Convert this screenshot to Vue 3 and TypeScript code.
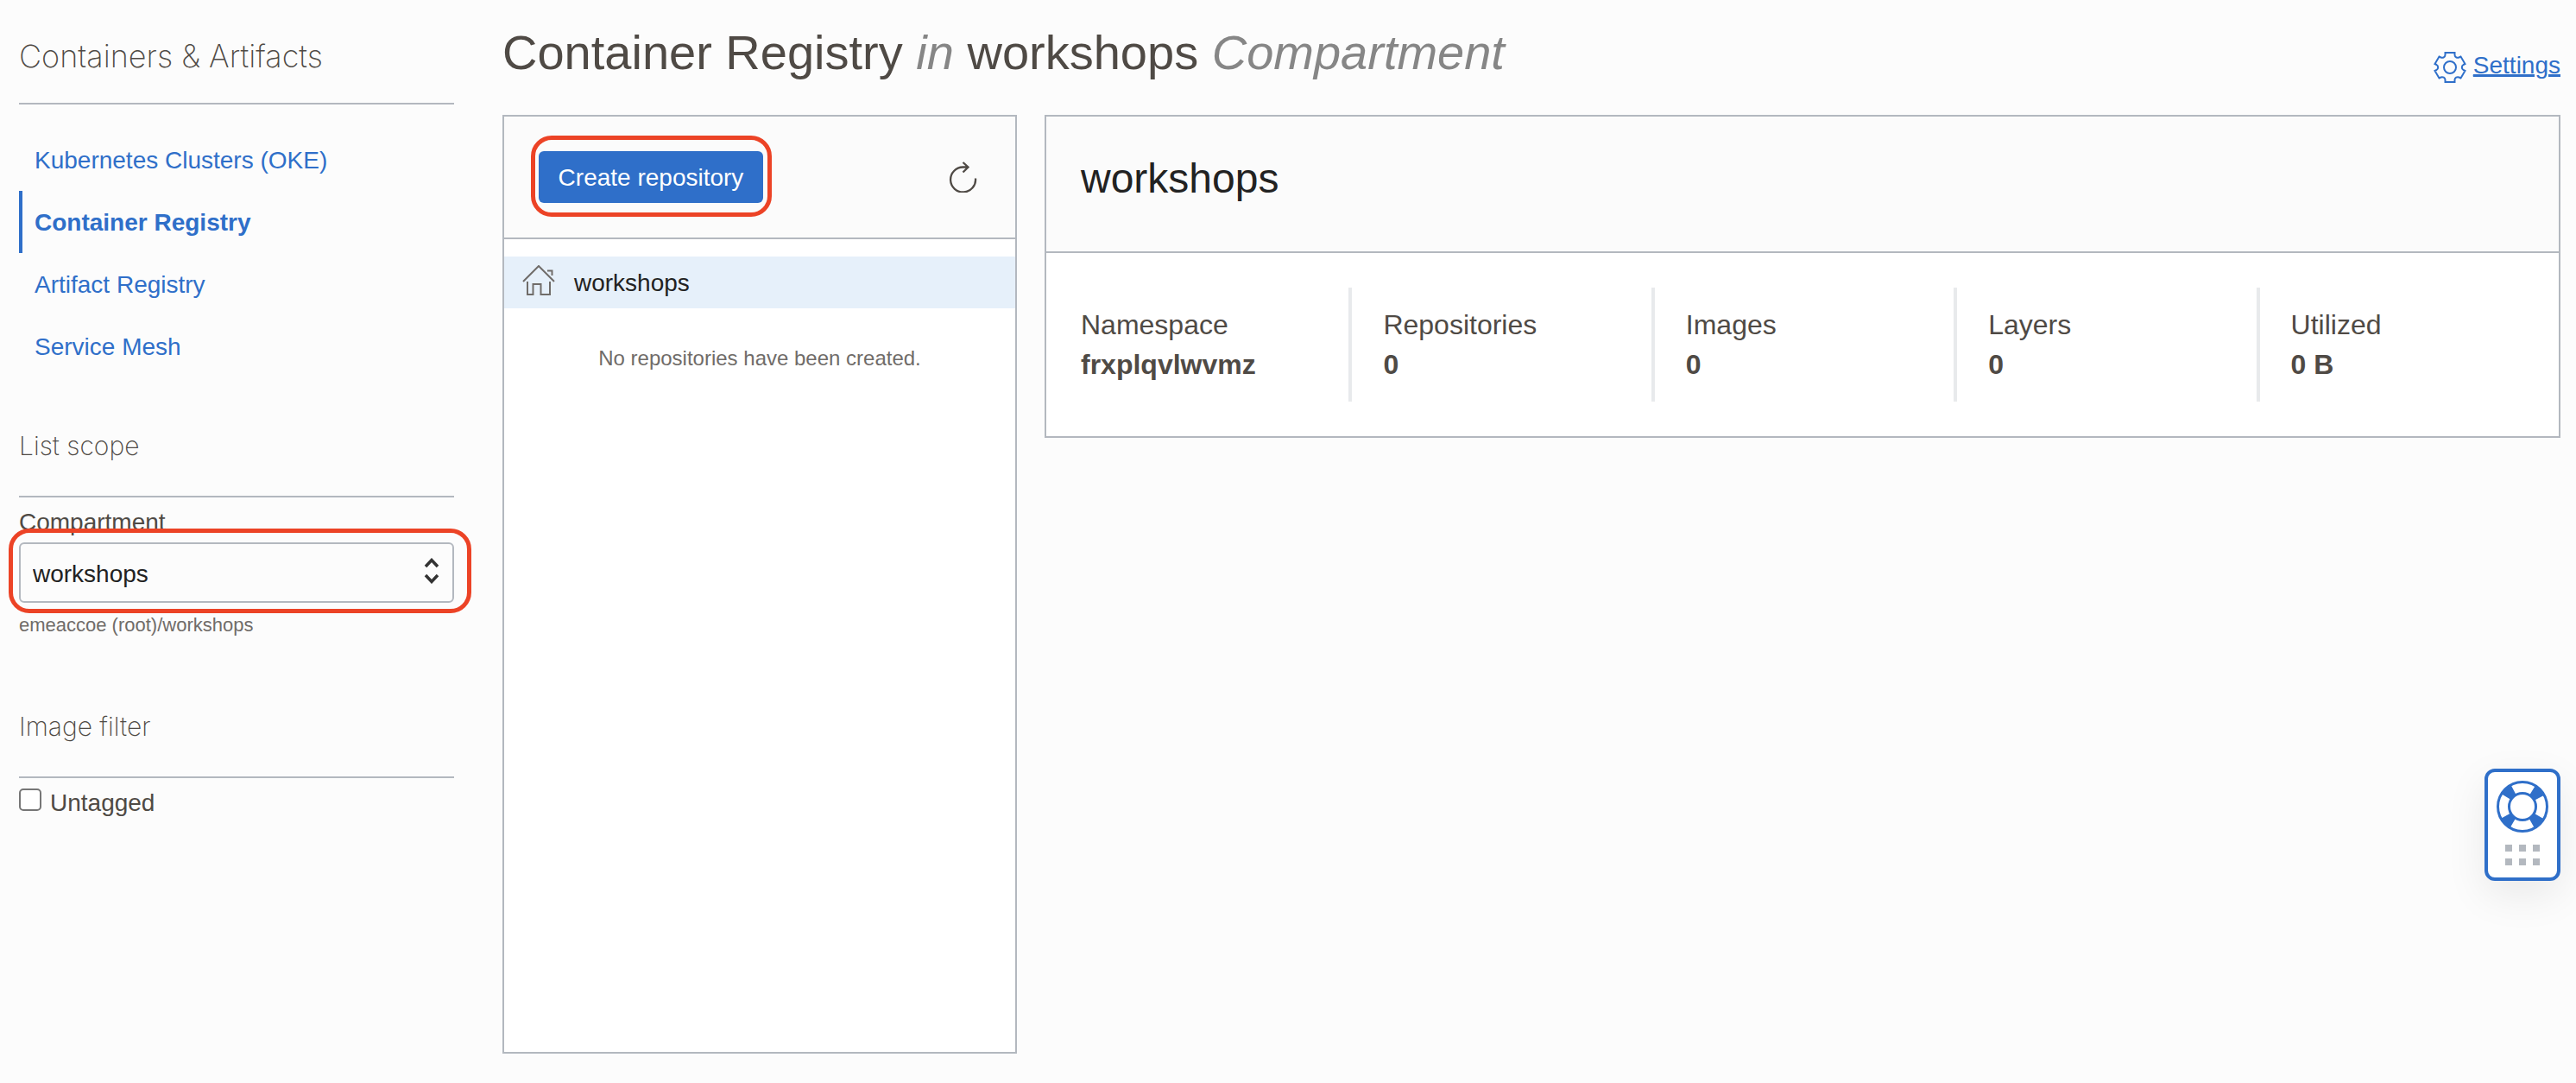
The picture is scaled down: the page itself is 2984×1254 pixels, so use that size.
<script setup lang="ts">
import { ref } from 'vue'

interface NavItem { label: string; active: boolean }
interface Stat { label: string; value: string }

const navItems: NavItem[] = [
  { label: 'Kubernetes Clusters (OKE)', active: false },
  { label: 'Container Registry', active: true },
  { label: 'Artifact Registry', active: false },
  { label: 'Service Mesh', active: false },
]

const stats: Stat[] = [
  { label: 'Namespace', value: 'frxplqvlwvmz' },
  { label: 'Repositories', value: '0' },
  { label: 'Images', value: '0' },
  { label: 'Layers', value: '0' },
  { label: 'Utilized', value: '0 B' },
]

const compartment = ref('workshops')
const untagged = ref(false)
</script>

<template>
  <div class="page">
    <aside class="sidebar">
      <h2 class="side-title">Containers &amp; Artifacts</h2>
      <nav class="nav">
        <a v-for="item in navItems" :key="item.label" href="#" class="nav-link" :class="{ active: item.active }">{{ item.label }}</a>
      </nav>

      <section class="side-section">
        <h3 class="section-title">List scope</h3>
        <label class="field-label" for="compartment">Compartment</label>
        <div class="select-wrap">
          <select id="compartment" v-model="compartment" class="select">
            <option value="workshops">workshops</option>
          </select>
          <svg class="chevrons" viewBox="0 0 18 30" width="18" height="30" aria-hidden="true">
            <path d="M2 10 9 2.500l7 7.500M2 20l7 7.500 7-7.500" fill="none" stroke="#333" stroke-width="3.500" />
          </svg>
        </div>
        <p class="hint">emeaccoe (root)/workshops</p>
      </section>

      <section class="side-section">
        <h3 class="section-title">Image filter</h3>
        <label class="check">
          <input v-model="untagged" type="checkbox" class="checkbox" />
          <span>Untagged</span>
        </label>
      </section>
    </aside>

    <main class="main">
      <header class="top">
        <h1 class="heading">Container Registry <em>in</em> workshops <em>Compartment</em></h1>
        <a href="#" class="settings">
          <svg viewBox="0 0 38 38" width="38" height="38" aria-hidden="true">
            <g fill="none" stroke="#2f6fc9" stroke-width="2">
              <path d="M13.500 2h11v2.500a3.500 3.500 0 0 0 5 3l2-1 5 8.500-2 1a3.500 3.500 0 0 0 0 6l2 1-5 8.500-2-1a3.500 3.500 0 0 0-5 3V36h-11v-2.500a3.500 3.500 0 0 0-5-3l-2 1-5-8.500 2-1a3.500 3.500 0 0 0 0-6l-2-1 5-8.500 2 1a3.500 3.500 0 0 0 5-3z" />
              <circle cx="19" cy="19" r="7" />
            </g>
          </svg>
          <span class="settings-text">Settings</span>
        </a>
      </header>

      <div class="content">
        <section class="repos">
          <div class="repos-head">
            <div class="create-wrap">
              <button type="button" class="create">Create repository</button>
            </div>
            <button type="button" class="refresh" aria-label="Refresh">
              <svg viewBox="0 0 34 36" width="34" height="36" aria-hidden="true">
                <path d="M32 19.500A14.500 14.500 0 1 1 17.500 6.500H23M17.500 1l6 5.500-6 6" fill="none" stroke="#4f4a45" stroke-width="2.300" />
              </svg>
            </button>
          </div>
          <div class="repo-row">
            <svg viewBox="0 0 38 40" width="38" height="40" aria-hidden="true">
              <path d="M1 19 19 1l18 18M29 6.500h5.500V12M6 19v15h6.500V22h9v12H32V19" fill="none" stroke="#706c69" stroke-width="2" />
            </svg>
            <span class="repo-name">workshops</span>
          </div>
          <p class="empty">No repositories have been created.</p>
        </section>

        <section class="detail">
          <h2 class="detail-title">workshops</h2>
          <dl class="stats">
            <div v-for="stat in stats" :key="stat.label" class="stat">
              <dt>{{ stat.label }}</dt>
              <dd>{{ stat.value }}</dd>
            </div>
          </dl>
        </section>
      </div>
    </main>

    <button type="button" class="help" aria-label="Help">
      <svg viewBox="0 0 60 60" width="60" height="60" aria-hidden="true">
        <circle cx="30" cy="30" r="22.500" fill="none" stroke="#2f6fc9" stroke-width="13" stroke-dasharray="12 23.343" stroke-dashoffset="-11.670" />
        <circle cx="30" cy="30" r="28.500" fill="none" stroke="#2f6fc9" stroke-width="3" />
        <circle cx="30" cy="30" r="15.500" fill="none" stroke="#2f6fc9" stroke-width="3" />
      </svg>
      <span class="dots"><i v-for="n in 6" :key="n" class="dot"></i></span>
    </button>
  </div>
</template>

<style>
body {
  margin: 0;
  background: #fcfcfc;
}
</style>

<style scoped>
.page {
  display: flex;
  box-sizing: border-box;
  min-height: 100vh;
  padding: 0 18px 34px 22px;
  font-family: "Liberation Sans", Arial, sans-serif;
  font-size: 28px;
  line-height: 36px;
  color: #4f4a45;
}
h1, h2, h3, p, dl, dd {
  margin: 0;
  font-weight: 400;
}
button {
  padding: 0;
  font: inherit;
  cursor: pointer;
}
svg {
  display: block;
}
.sidebar {
  flex: none;
  width: 504px;
  margin-right: 56px;
}
.side-title,
.section-title {
  font-family: Inter, "Liberation Sans", sans-serif;
  font-weight: 200;
  border-bottom: 2px solid #b3b8bf;
}
.side-title {
  padding: 41px 0 30px;
  font-size: 36px;
  line-height: 48px;
}
.nav {
  display: flex;
  flex-direction: column;
  padding: 28px 0 59px;
}
.nav-link {
  padding: 2px 0 0 14px;
  border-left: 4px solid transparent;
  line-height: 70px;
  color: #2f6fc9;
  text-decoration: none;
}
.nav-link.active {
  border-color: #2f6fc9;
  font-weight: 700;
}
.side-section {
  padding-bottom: 79px;
}
.section-title {
  padding-bottom: 38px;
  font-size: 30px;
  line-height: 40px;
}
.field-label {
  display: block;
  padding: 11px 0 5px;
}
.select-wrap {
  position: relative;
}
.select-wrap::before,
.create-wrap::before {
  content: "";
  position: absolute;
  border: 5px solid #ec4326;
  border-radius: 24px;
  pointer-events: none;
}
.select-wrap::before {
  inset: -16px -20px -12px -12px;
}
.select {
  display: block;
  width: 100%;
  height: 70px;
  padding: 4px 48px 0 14px;
  appearance: none;
  background: #fcfcfc;
  border: 2px solid #b3b8bf;
  border-radius: 6px;
  font: inherit;
  color: #222;
}
.chevrons {
  position: absolute;
  top: 18px;
  right: 17px;
  pointer-events: none;
}
.hint {
  padding-top: 8px;
  font-size: 22px;
  color: #706c69;
}
.check {
  display: flex;
  align-items: flex-start;
  gap: 10px;
  padding-top: 11px;
}
.checkbox {
  appearance: none;
  box-sizing: border-box;
  width: 26px;
  height: 26px;
  margin: 1px 0 0;
  background: #fff;
  border: 2px solid #767676;
  border-radius: 5px;
}
.main {
  display: flex;
  flex: 1;
  flex-direction: column;
  min-width: 0;
}
.top {
  display: flex;
  align-items: flex-start;
  justify-content: space-between;
}
.heading {
  padding: 29px 0 40px;
  font-size: 56px;
  line-height: 64px;
}
.heading em {
  color: #868686;
}
.settings {
  display: flex;
  gap: 8px;
  padding-top: 59px;
  color: #2f6fc9;
}
.settings-text {
  line-height: 34px;
  text-decoration: underline;
  text-decoration-thickness: 2px;
}
.content {
  display: flex;
  flex: 1;
  align-items: flex-start;
  gap: 32px;
}
.repos {
  box-sizing: border-box;
  flex: none;
  align-self: stretch;
  width: 596px;
  border: 2px solid #b3b8bf;
  background: #fff;
}
.repos-head {
  display: flex;
  align-items: center;
  justify-content: space-between;
  height: 140px;
  padding: 0 44px 0 40px;
  border-bottom: 2px solid #b3b8bf;
  background: #fbfbfb;
}
.create-wrap {
  position: relative;
}
.create-wrap::before {
  inset: -18px -10px -16px -9px;
}
.create {
  display: block;
  width: 260px;
  height: 60px;
  padding-top: 2px;
  border: 0;
  border-radius: 6px;
  background: #2f6fc9;
  color: #fff;
}
.refresh {
  border: 0;
  background: none;
  color: inherit;
}
.repo-row {
  display: flex;
  align-items: center;
  gap: 22px;
  height: 60px;
  margin-top: 20px;
  padding-left: 21px;
  background: #e6f0fa;
  color: #222;
}
.repo-name {
  padding-top: 2px;
}
.empty {
  padding-top: 40px;
  font-size: 24px;
  text-align: center;
  color: #706c69;
}
.detail {
  flex: 1;
  min-width: 0;
  border: 2px solid #b3b8bf;
  background: #fff;
}
.detail-title {
  padding: 44px 40px 56px;
  border-bottom: 2px solid #b3b8bf;
  background: #fbfbfb;
  font-size: 48px;
  line-height: 56px;
  color: #222;
}
.stats {
  display: grid;
  grid-template-columns: repeat(5, 1fr);
  padding: 40px 0;
  font-size: 32px;
  line-height: 46px;
}
.stat {
  padding: 20px 0 20px 36px;
  border-left: 4px solid #e8eaec;
}
.stat:first-child {
  border-color: transparent;
}
.stat dd {
  font-weight: 700;
}
.help {
  position: fixed;
  top: 890px;
  right: 18px;
  display: flex;
  flex-direction: column;
  align-items: center;
  box-sizing: border-box;
  width: 88px;
  height: 130px;
  padding-top: 10px;
  border: 4px solid #2f6fc9;
  border-radius: 12px;
  background: #fff;
  box-shadow: 0 16px 48px rgba(0, 0, 0, 0.08);
}
.dots {
  display: grid;
  grid-template-columns: repeat(3, 8px);
  gap: 8px;
  padding-top: 14px;
}
.dot {
  height: 8px;
  background: #b3b8bf;
}
</style>
